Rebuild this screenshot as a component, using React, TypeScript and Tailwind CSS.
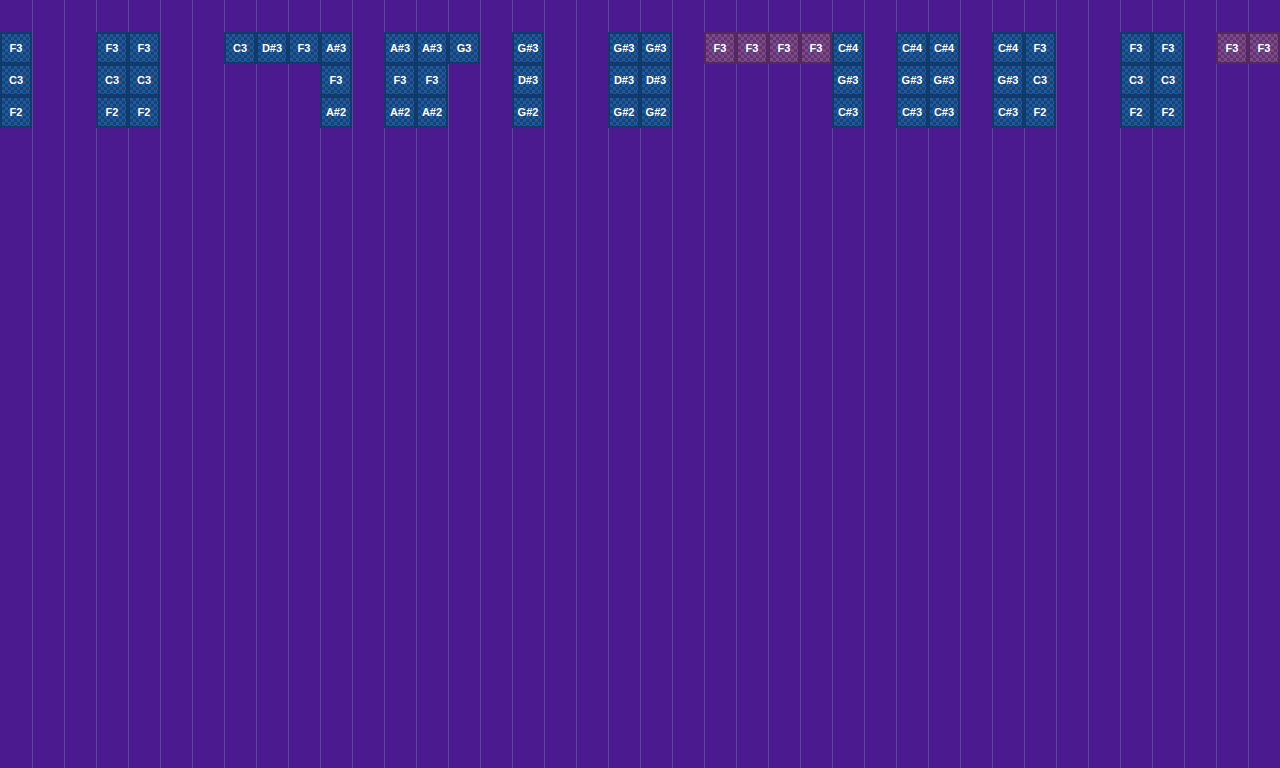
const A=["F3","C3","F2"],B=["A#3","F3","A#2"],G=["G#3","D#3","G#2"],C=["C#4","G#3","C#3"];
const cols:Record<number,{n:string[],p?:boolean}>={0:{n:A},3:{n:A},4:{n:A},7:{n:["C3"]},8:{n:["D#3"]},9:{n:["F3"]},10:{n:B},12:{n:B},13:{n:B},14:{n:["G3"]},16:{n:G},19:{n:G},20:{n:G},22:{n:["F3"],p:true},23:{n:["F3"],p:true},24:{n:["F3"],p:true},25:{n:["F3"],p:true},26:{n:C},28:{n:C},29:{n:C},31:{n:C},32:{n:A},35:{n:A},36:{n:A},38:{n:["F3"],p:true},39:{n:["F3"],p:true}};
export default function App(){
return <div className="w-[1280px] h-[768px] bg-[#4b1a8f] flex overflow-hidden" style={{fontFamily:'"Liberation Sans",Arial,sans-serif'}}>
{Array.from({length:40},(_,i)=>{const c=cols[i];return <div key={i} className={`w-[32px] shrink-0 h-full ${i>0?"border-l border-[#6540a8]":""} flex flex-col pt-[32px]`}>
{c?.n.map((n,j)=><div key={j} className={`w-[32px] h-[32px] ${i>0?"-ml-px":""} relative z-10 p-[2px] ${c.p?"bg-[#55285f]":"bg-[#0f3a6a]"}`}>
<div className={`w-full h-full flex items-center justify-center text-[11px] font-bold text-white ${c.p?"bg-[conic-gradient(#633472_25%,#7a4a8a_0_50%,#633472_0_75%,#7a4a8a_0)] bg-[length:6px_6px]":"bg-[conic-gradient(#154478_25%,#22579a_0_50%,#154478_0_75%,#22579a_0)] bg-[length:6px_6px]"}`}>{n}</div></div>)}
</div>})}
</div>}
